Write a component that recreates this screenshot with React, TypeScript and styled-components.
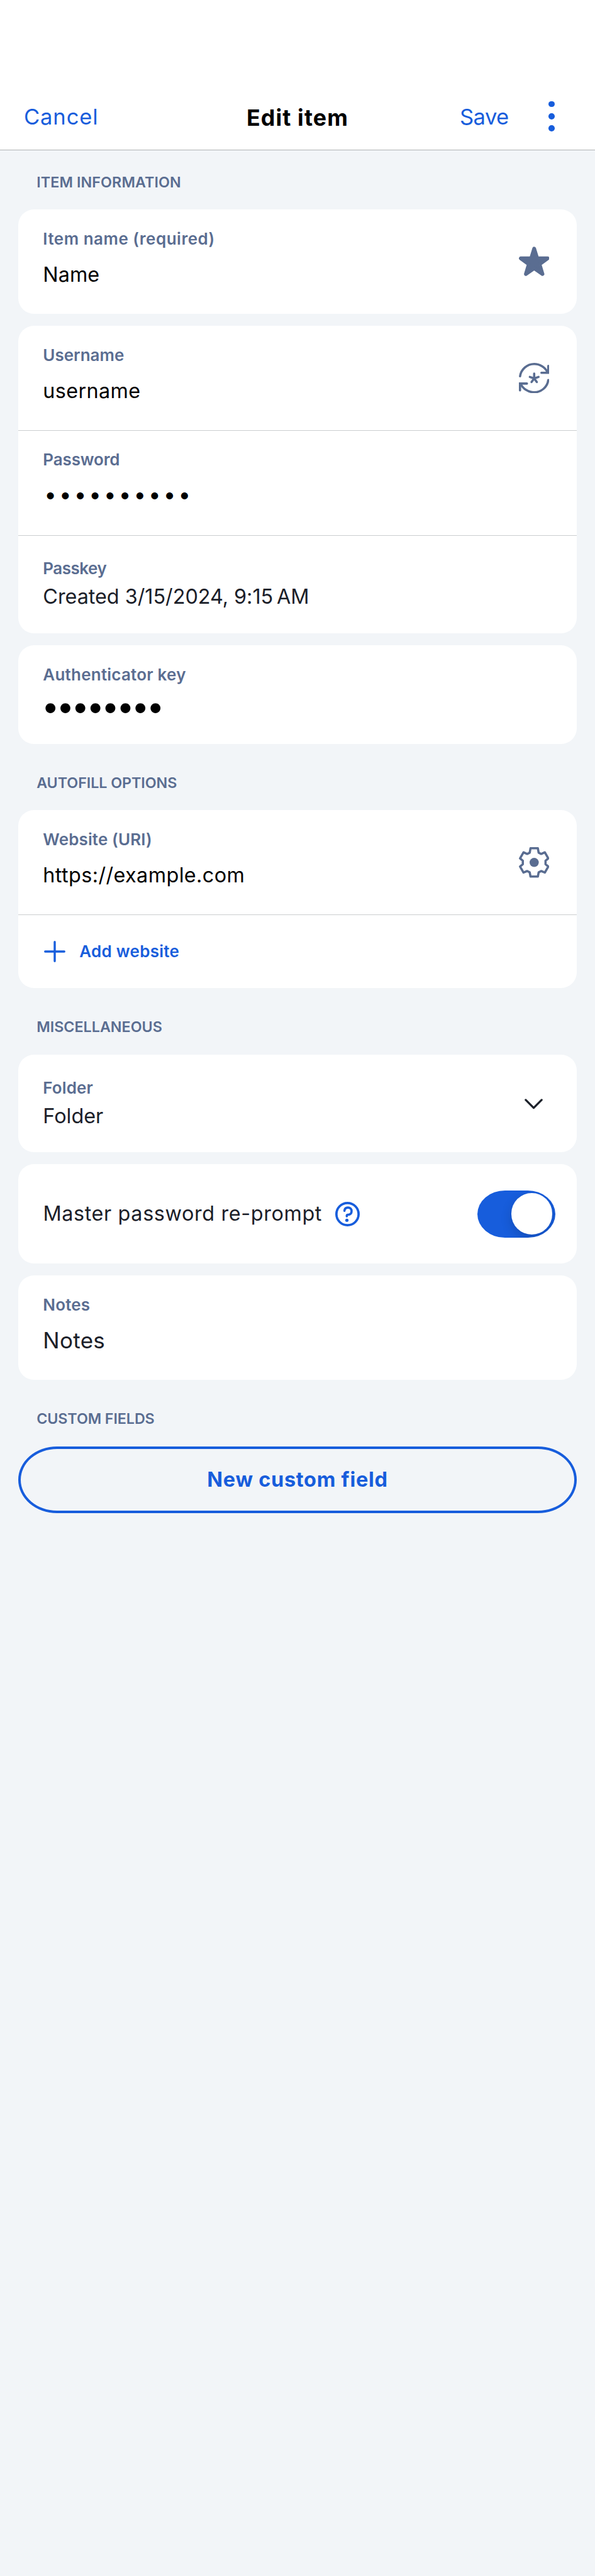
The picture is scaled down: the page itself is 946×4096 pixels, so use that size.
import React from "react";
import styled, { createGlobalStyle, css } from "styled-components";

const BLUE = "#175ddc";
const SLATE = "#5a6d91";
const INK = "#1b2029";
const CANVAS = "#f2f5f8";

const GlobalStyle = createGlobalStyle`
  *, *::before, *::after { box-sizing: border-box; }
  html, body { margin: 0; background: ${CANVAS}; }
  body {
    font-family: Inter, "Liberation Sans", sans-serif;
    -webkit-font-smoothing: antialiased;
  }
  svg { display: block; flex: none; }
`;

const Screen = styled.div`
  width: 946px;
  min-height: 4096px;
  background: ${CANVAS};
`;

const Header = styled.header`
  display: grid;
  grid-template-columns: 1fr auto 1fr;
  align-items: center;
  height: 238.5px;
  padding: 132px 38px 0;
  background: #fff;
  border-bottom: 1px solid #b0b2b4;
`;

const HeaderTitle = styled.h1`
  margin: 4px 0 0;
  font-size: 35.8px;
  font-weight: 700;
  line-height: 44px;
  letter-spacing: 1.1px;
  color: #000;
`;

const HeaderActions = styled.div`
  display: flex;
  align-items: center;
  justify-content: flex-end;
`;

const TextButton = styled.button<{ $track?: number }>`
  padding: 0;
  border: 0;
  background: none;
  font: 400 34.6px/44px Inter, sans-serif;
  letter-spacing: ${(p) => p.$track ?? 0}px;
  color: ${BLUE};
  text-align: left;
`;

const MenuButton = styled.button`
  display: flex;
  flex-direction: column;
  gap: 9.7px;
  margin: 0 26px 0 63.6px;
  padding: 0;
  border: 0;
  background: none;
`;

const MenuDot = styled.span`
  width: 9.7px;
  height: 9.7px;
  border-radius: 50%;
  background: ${BLUE};
`;

const Content = styled.main`
  padding: 0 29px;
`;

const SectionTitle = styled.h2<{ $first?: boolean; $track?: number }>`
  display: flex;
  align-items: flex-end;
  height: ${(p) => (p.$first ? 94.7 : 105.3)}px;
  margin: 0;
  padding: 0 0 28.5px 29.2px;
  font-size: 23.3px;
  font-weight: 600;
  line-height: 30px;
  letter-spacing: ${(p) => p.$track ?? 0}px;
  color: ${SLATE};
`;

const Stack = styled.div`
  display: flex;
  flex-direction: column;
  gap: 19.4px;
`;

const Card = styled.section`
  border-radius: 25px;
  background: #fff;
  overflow: hidden;
`;

const Row = styled.div<{ $h: number; $compact?: boolean; $divided?: boolean }>`
  display: flex;
  justify-content: space-between;
  height: ${(p) => p.$h}px;
  padding: ${(p) => (p.$compact ? 37.8 : 31.6) - (p.$divided ? 0.9 : 0)}px 43.6px 0 39.3px;
  border-top: ${(p) => (p.$divided ? "1px solid #cbcdcf" : "0")};
`;

const FieldText = styled.div<{ $gap: number }>`
  display: flex;
  flex-direction: column;
  gap: ${(p) => p.$gap}px;
`;

const Label = styled.div<{ $track?: number }>`
  font-size: 26px;
  font-weight: 600;
  line-height: 30px;
  letter-spacing: ${(p) => p.$track ?? 0}px;
  color: ${SLATE};
  white-space: nowrap;
`;

const Value = styled.div<{ $track?: number; $ink?: boolean; $large?: boolean }>`
  font-size: ${(p) => (p.$large ? 35 : 32.4)}px;
  font-weight: 400;
  line-height: 38px;
  letter-spacing: ${(p) => p.$track ?? 0}px;
  color: ${(p) => (p.$ink ? INK : "#000")};
  white-space: nowrap;
`;

const Masked = styled.div<{ $size: number; $track: number; $indent: number }>`
  height: 38px;
  margin-left: ${(p) => p.$indent}px;
  font-size: ${(p) => p.$size}px;
  line-height: 38px;
  letter-spacing: ${(p) => p.$track}px;
  color: #000;
  white-space: nowrap;
`;

const Trailing = styled.div<{ $mt: number; $mr?: number }>`
  margin-top: ${(p) => p.$mt}px;
  margin-right: ${(p) => p.$mr ?? 0}px;
`;

const inline = css`
  display: flex;
  align-items: center;
  padding: 0 34px 0 39.4px;
`;

const AddRow = styled.button`
  ${inline}
  width: 100%;
  height: 117.4px;
  gap: 22px;
  padding-left: 41.2px;
  border: 0;
  border-top: 1px solid #cbcdcf;
  background: none;
  font: 600 26px/30px Inter, sans-serif;
  letter-spacing: 0.27px;
  color: ${BLUE};
`;

const ToggleRow = styled.div`
  ${inline}
  height: 157.8px;
`;

const ToggleLabel = styled.span`
  margin-right: 21px;
  font-size: 32.4px;
  line-height: 38px;
  letter-spacing: 0.6px;
  color: ${INK};
  white-space: nowrap;
`;

const Toggle = styled.div`
  display: flex;
  align-items: center;
  justify-content: flex-end;
  width: 123.6px;
  height: 75.2px;
  margin-left: auto;
  padding-right: 4.6px;
  border-radius: 44px / 37.6px;
  background: ${BLUE};
  overflow: hidden;
`;

const Thumb = styled.span`
  width: 65.6px;
  height: 65.6px;
  border-radius: 50%;
  background: #fff;
  box-shadow: 0 7px 18px rgba(0, 0, 0, 0.16);
`;

const OutlineButton = styled.button`
  display: block;
  width: 100%;
  height: 106.8px;
  padding: 0;
  border: 4px solid ${BLUE};
  border-radius: 62px / 53.4px;
  background: transparent;
  font: 700 32.5px/38px Inter, sans-serif;
  letter-spacing: 0.7px;
  color: ${BLUE};
`;

const StarIcon = () => (
  <svg width="48.6" height="48.6" viewBox="0 0 60 60">
    <path
      d="M30 4 L36 23.2 H56.3 L40.6 34.6 L46.4 54 L30 42.6 L13.6 54 L19.4 34.6 L3.7 23.2 H24 Z"
      fill={SLATE}
      stroke={SLATE}
      strokeWidth="7.2"
      strokeLinejoin="round"
    />
  </svg>
);

const GenerateIcon = () => (
  <svg
    width="48.6"
    height="48.6"
    viewBox="0 0 60 60"
    fill="none"
    stroke={SLATE}
    strokeWidth="4.4"
    strokeLinecap="round"
    strokeLinejoin="round"
  >
    <path d="M2.3 26.3 C4.2 12.5 16 2.2 30 2.2 C41.5 2.2 51.8 9 56.2 18.4" />
    <path d="M57.8 6 V19.4 H44.2" strokeLinejoin="miter" />
    <path d="M57.7 33.7 C55.8 47.5 44 57.8 30 57.8 C18.5 57.8 8.2 51 3.8 41.6" />
    <path d="M2.2 54 V40.6 H15.8" strokeLinejoin="miter" />
    <path d="M30 21 V30.5 M30 30.5 L21.5 27.6 M30 30.5 L38.5 27.6 M30 30.5 L24.8 37.6 M30 30.5 L35.2 37.6" />
  </svg>
);

const GearIcon = () => (
  <svg width="48.6" height="48.6" viewBox="0 0 60 60">
    <path
      d="M22.8 2.2 H37.2 L38.8 11 L43.7 13.3 L51 10.2 L57.7 22.2 L52.3 26.6 V33.6 L57.7 38 L51 49.8 L43.7 46.9 L38.8 49.6 L37.2 57.8 H22.8 L21.2 49.6 L16.3 46.9 L9 49.8 L2.3 38 L7.7 33.6 V26.6 L2.3 22.2 L9 10.2 L16.3 13.3 L21.2 11 Z"
      fill="none"
      stroke={SLATE}
      strokeWidth="4.4"
      strokeLinejoin="round"
    />
    <circle cx="30" cy="30" r="9" fill={SLATE} />
  </svg>
);

const PlusIcon = () => (
  <svg width="34" height="34" viewBox="0 0 42 42" stroke={BLUE} strokeWidth="4.2" strokeLinecap="round">
    <path d="M21 2.2 V39.8 M2.2 21 H39.8" />
  </svg>
);

const ChevronIcon = () => (
  <svg
    width="29"
    height="17"
    viewBox="0 0 36 21"
    fill="none"
    stroke={INK}
    strokeWidth="4"
    strokeLinecap="round"
    strokeLinejoin="round"
  >
    <path d="M2.3 2.4 L18 18 L33.7 2.4" />
  </svg>
);

const HelpIcon = () => (
  <svg width="39" height="39" viewBox="0 0 48 48" fill="none" stroke={BLUE}>
    <circle cx="24" cy="24" r="21.7" strokeWidth="4.6" />
    <path
      d="M18 17.6 C18.3 13.6 21 11.2 24.8 11.2 C29 11.2 32 14 32 18 C32 22.6 29 25 24.6 25.2 C23.2 25.3 22.6 26 22.6 27 V28.2"
      strokeWidth="4.4"
      strokeLinecap="round"
    />
    <circle cx="22.8" cy="36" r="3.2" fill={BLUE} stroke="none" />
  </svg>
);

export default function App() {
  return (
    <Screen>
      <GlobalStyle />
      <Header>
        <TextButton $track={0.85}>Cancel</TextButton>
        <HeaderTitle>Edit item</HeaderTitle>
        <HeaderActions>
          <TextButton $track={-0.55}>Save</TextButton>
          <MenuButton aria-label="More options">
            <MenuDot />
            <MenuDot />
            <MenuDot />
          </MenuButton>
        </HeaderActions>
      </Header>
      <Content>
        <SectionTitle $first $track={0.1}>ITEM INFORMATION</SectionTitle>
        <Stack>
          <Card>
            <Row $h={165.8}>
              <FieldText $gap={23}>
                <Label $track={0.5}>Item name (required)</Label>
                <Value>Name</Value>
              </FieldText>
              <Trailing $mt={27.2}><StarIcon /></Trailing>
            </Row>
          </Card>
          <Card>
            <Row $h={166}>
              <FieldText $gap={23}>
                <Label>Username</Label>
                <Value $track={0.36}>username</Value>
              </FieldText>
              <Trailing $mt={26.8}><GenerateIcon /></Trailing>
            </Row>
            <Row $h={166.4} $divided>
              <FieldText $gap={21.4}>
                <Label $track={-0.14}>Password</Label>
                <Masked $size={35} $track={4} $indent={2}>••••••••••</Masked>
              </FieldText>
            </Row>
            <Row $h={156.2} $compact $divided>
              <FieldText $gap={11.6}>
                <Label $track={-0.5}>Passkey</Label>
                <Value $ink $track={-0.05}>Created 3/15/2024, 9:15{"\u202f"}AM</Value>
              </FieldText>
            </Row>
          </Card>
          <Card>
            <Row $h={156.4}>
              <FieldText $gap={15.9}>
                <Label $track={0.22}>Authenticator key</Label>
                <Masked $size={50.6} $track={-4.6} $indent={-2.4}>••••••••</Masked>
              </FieldText>
            </Row>
          </Card>
        </Stack>
        <SectionTitle $track={-0.06}>AUTOFILL OPTIONS</SectionTitle>
        <Card>
          <Row $h={166}>
            <FieldText $gap={23.2}>
              <Label $track={0.13}>Website (URI)</Label>
              <Value $track={0.38}>https://example.com</Value>
            </FieldText>
            <Trailing $mt={27.3}><GearIcon /></Trailing>
          </Row>
          <AddRow>
            <PlusIcon />
            Add website
          </AddRow>
        </Card>
        <SectionTitle>MISCELLANEOUS</SectionTitle>
        <Stack>
          <Card>
            <Row $h={155.2} $compact>
              <FieldText $gap={11.2}>
                <Label $track={0.1}>Folder</Label>
                <Value $ink>Folder</Value>
              </FieldText>
              <Trailing $mt={32.6} $mr={10}><ChevronIcon /></Trailing>
            </Row>
          </Card>
          <Card>
            <ToggleRow>
              <ToggleLabel>Master password re-prompt</ToggleLabel>
              <HelpIcon />
              <Toggle role="switch" aria-checked="true"><Thumb /></Toggle>
            </ToggleRow>
          </Card>
          <Card>
            <Row $h={165.8}>
              <FieldText $gap={22}>
                <Label $track={0.15}>Notes</Label>
                <Value $ink $large $track={0.3}>Notes</Value>
              </FieldText>
            </Row>
          </Card>
        </Stack>
        <SectionTitle $track={-0.1}>CUSTOM FIELDS</SectionTitle>
        <OutlineButton>New custom field</OutlineButton>
      </Content>
    </Screen>
  );
}
